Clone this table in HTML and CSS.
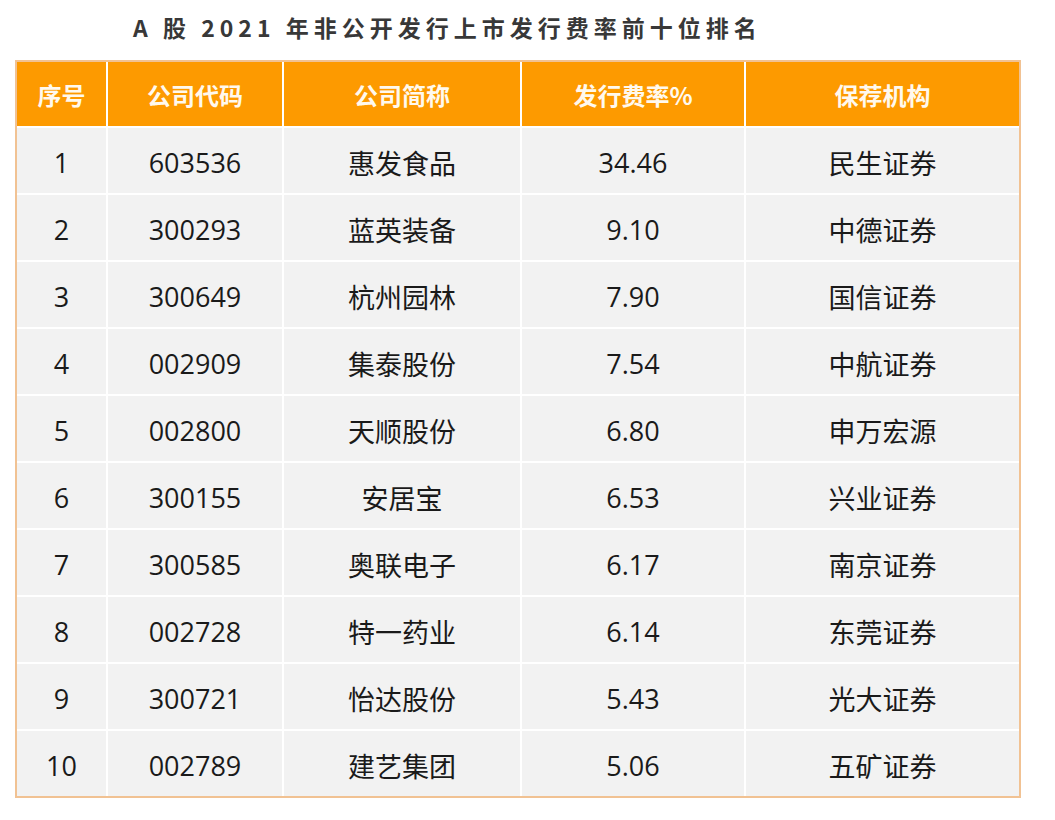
FILE: index.html
```html
<!DOCTYPE html>
<html lang="zh-CN">
<head>
<meta charset="utf-8">
<link rel="stylesheet" href="styles.css">
</head>
<body>
<div class="title">A 股 2021 年非公开发行上市发行费率前十位排名</div>
<div class="table">
  <div class="cell head">序号</div>
  <div class="cell head">公司代码</div>
  <div class="cell head">公司简称</div>
  <div class="cell head">发行费率%</div>
  <div class="cell head">保荐机构</div>

  <div class="cell">1</div><div class="cell">603536</div><div class="cell">惠发食品</div><div class="cell">34.46</div><div class="cell">民生证券</div>
  <div class="cell">2</div><div class="cell">300293</div><div class="cell">蓝英装备</div><div class="cell">9.10</div><div class="cell">中德证券</div>
  <div class="cell">3</div><div class="cell">300649</div><div class="cell">杭州园林</div><div class="cell">7.90</div><div class="cell">国信证券</div>
  <div class="cell">4</div><div class="cell">002909</div><div class="cell">集泰股份</div><div class="cell">7.54</div><div class="cell">中航证券</div>
  <div class="cell">5</div><div class="cell">002800</div><div class="cell">天顺股份</div><div class="cell">6.80</div><div class="cell">申万宏源</div>
  <div class="cell">6</div><div class="cell">300155</div><div class="cell">安居宝</div><div class="cell">6.53</div><div class="cell">兴业证券</div>
  <div class="cell">7</div><div class="cell">300585</div><div class="cell">奥联电子</div><div class="cell">6.17</div><div class="cell">南京证券</div>
  <div class="cell">8</div><div class="cell">002728</div><div class="cell">特一药业</div><div class="cell">6.14</div><div class="cell">东莞证券</div>
  <div class="cell">9</div><div class="cell">300721</div><div class="cell">怡达股份</div><div class="cell">5.43</div><div class="cell">光大证券</div>
  <div class="cell">10</div><div class="cell">002789</div><div class="cell">建艺集团</div><div class="cell">5.06</div><div class="cell">五矿证券</div>
</div>
</body>
</html>
```
FILE: styles.css
```css
html, body {
  margin: 0;
  padding: 0;
  background: #ffffff;
}
body {
  font-family: "Open Sans", "Noto Sans CJK SC", sans-serif;
}
.title {
  height: 60px;
  line-height: 54px;
  padding-left: 133px;
  font-family: "Noto Sans CJK SC", sans-serif;
  font-weight: 700;
  font-size: 23px;
  letter-spacing: 5px;
  color: #383838;
  white-space: nowrap;
}
.table {
  margin-left: 15px;
  width: 1002px;
  border: 2px solid #f1c293;
  background: #ffffff;
  display: grid;
  grid-template-columns: 89px 174px 236px 222px 273px;
  grid-template-rows: 64px repeat(10, 65px);
  gap: 2px;
}
.cell {
  background: #f2f2f2;
  display: flex;
  align-items: center;
  justify-content: center;
  font-size: 27px;
  color: #1a1a1a;
  padding-top: 3px;
  box-sizing: border-box;
}
.head {
  background: #fd9a00;
  color: #fff9ee;
  font-family: "Noto Sans CJK SC", sans-serif;
  font-weight: 700;
  font-size: 24px;
  padding-top: 0;
}
```
